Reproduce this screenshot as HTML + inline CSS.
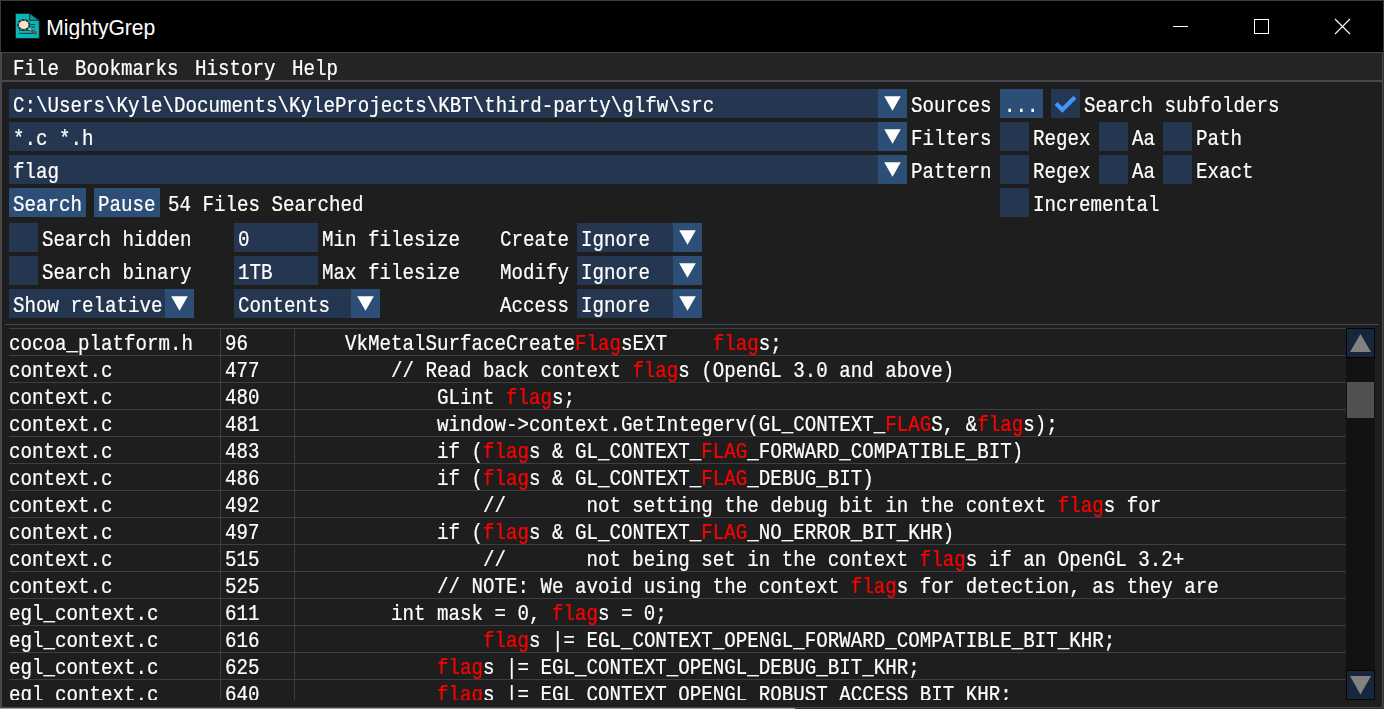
<!DOCTYPE html>
<html><head><meta charset="utf-8"><title>MightyGrep</title>
<style>
html,body{margin:0;padding:0;background:#000;}
body{width:1384px;height:709px;position:relative;overflow:hidden;font-family:"Liberation Mono",monospace;}
.r{position:absolute;display:block}
.t{position:absolute;white-space:pre;color:#fff;font-family:"Liberation Mono",monospace;font-size:19.165px;line-height:20px;height:20px;transform:scaleY(1.15);transform-origin:0 0;will-change:transform;-webkit-text-stroke:0.2px currentColor;}
.t b{font-weight:normal;color:#ff0000}
.title{position:absolute;white-space:pre;color:#fff;font-family:"Liberation Sans",sans-serif;font-size:21.1px;line-height:24px;transform:scaleY(1.05);transform-origin:0 4.8px;}
.clip{position:absolute;overflow:hidden}
</style></head><body>
<div class="r" style="left:0px;top:0px;width:1384px;height:709px;background:#000;"></div>
<div class="r" style="left:0px;top:0px;width:1384px;height:1px;background:#3c3c3c;"></div>
<svg class="r" style="left:15px;top:13px" width="26" height="27" viewBox="0 0 26 27">
<path d="M0.4 0.4H14.6L24.3 7.3V25.6H0.4Z" fill="#09b6b6" stroke="#2a1414" stroke-width="0.9"/>
<path d="M14.6 0.4V7.3H24.3Z" fill="#079797" stroke="#2a1414" stroke-width="0.8"/>
<path d="M16 11.5H20M16 14H20M4.3 17.3H16.2M4.1 20.4H18.9" stroke="#1c2626" stroke-width="0.9"/>
<ellipse cx="8.8" cy="11.9" rx="5.7" ry="4.95" fill="#f5e6c8" stroke="#56676e" stroke-width="1.7"/>
<ellipse cx="8.8" cy="11.9" rx="5.7" ry="4.95" fill="none" stroke="#222c33" stroke-width="1.7" stroke-dasharray="2.2 1.6"/>
<path d="M13.6 15.8L16.4 17.3" stroke="#e6dcc2" stroke-width="1.1"/>
<path d="M17.2 17.9L20.4 20" stroke="#4a5a60" stroke-width="3.2" stroke-linecap="round"/>
</svg>
<div class="title" style="left:46.3px;top:15px">MightyGrep</div>
<svg class="r" style="left:1160px;top:1px" width="222" height="51" viewBox="0 0 222 51"><path d="M13 25.5H28" stroke="#fff" stroke-width="1"/><rect x="94.5" y="18.5" width="14" height="14" fill="none" stroke="#fff" stroke-width="1"/><path d="M175 18L190 33M190 18L175 33" stroke="#fff" stroke-width="1.1"/></svg>
<div class="r" style="left:1px;top:52px;width:1382px;height:656px;background:#1e1e1e;"></div>
<div class="r" style="left:1px;top:52px;width:1382px;height:1px;background:#46464f;"></div>
<div class="r" style="left:1px;top:52px;width:1px;height:656px;background:#46464f;"></div>
<div class="r" style="left:1382px;top:52px;width:1px;height:656px;background:#46464f;"></div>
<div class="r" style="left:1px;top:707px;width:1382px;height:1px;background:#46464f;"></div>
<div class="r" style="left:1383px;top:0px;width:1px;height:709px;background:#363636;"></div>
<div class="r" style="left:0px;top:0px;width:1px;height:52px;background:#3a3a3a;"></div>
<div class="r" style="left:0px;top:52px;width:1px;height:657px;background:#4a4744;"></div>
<div class="r" style="left:0px;top:708px;width:795px;height:1px;background:#9c9c9c;"></div>
<div class="r" style="left:795px;top:708px;width:589px;height:1px;background:#2c2c2c;"></div>
<div class="r" style="left:2px;top:53px;width:1380px;height:27px;background:#242424;"></div>
<div class="r" style="left:1px;top:80px;width:1382px;height:2px;background:#46464f;"></div>
<div class="t" style="left:13px;top:57.5px">File</div>
<div class="t" style="left:75px;top:57.5px">Bookmarks</div>
<div class="t" style="left:195px;top:57.5px">History</div>
<div class="t" style="left:292px;top:57.5px">Help</div>
<div class="r" style="left:9px;top:89px;width:869px;height:29px;background:#243650;"></div>
<div class="r" style="left:878px;top:89px;width:29px;height:29px;background:#2d4e76;"></div>
<svg class="r" style="left:878px;top:89px" width="29" height="29" viewBox="0 0 29 29"><path d="M6.2 7.3H22.8L14.5 21.8Z" fill="#fff"/></svg>
<div class="t" style="left:13px;top:94.5px">C:\Users\Kyle\Documents\KyleProjects\KBT\third-party\glfw\src</div>
<div class="t" style="left:911px;top:94.5px">Sources</div>
<div class="r" style="left:1000px;top:89px;width:43px;height:29px;background:#2d4e76;"></div>
<div class="t" style="left:1004px;top:94.5px">...</div>
<div class="r" style="left:1051px;top:89px;width:29px;height:29px;background:#243650;"></div>
<svg class="r" style="left:1051px;top:89px" width="29" height="29" viewBox="0 0 29 29"><path d="M5.05 14.5L11.35 20.8L23.95 8.2" fill="none" stroke="#4296fa" stroke-width="4.2"/></svg>
<div class="t" style="left:1084px;top:94.5px">Search subfolders</div>
<div class="r" style="left:9px;top:122px;width:869px;height:29px;background:#243650;"></div>
<div class="r" style="left:878px;top:122px;width:29px;height:29px;background:#2d4e76;"></div>
<svg class="r" style="left:878px;top:122px" width="29" height="29" viewBox="0 0 29 29"><path d="M6.2 7.3H22.8L14.5 21.8Z" fill="#fff"/></svg>
<div class="t" style="left:13px;top:127.5px">*.c *.h</div>
<div class="t" style="left:911px;top:127.5px">Filters</div>
<div class="r" style="left:1000px;top:122px;width:29px;height:29px;background:#243650;"></div>
<div class="t" style="left:1033px;top:127.5px">Regex</div>
<div class="r" style="left:1099px;top:122px;width:29px;height:29px;background:#243650;"></div>
<div class="t" style="left:1132px;top:127.5px">Aa</div>
<div class="r" style="left:1163px;top:122px;width:29px;height:29px;background:#243650;"></div>
<div class="t" style="left:1196px;top:127.5px">Path</div>
<div class="r" style="left:9px;top:155px;width:869px;height:29px;background:#243650;"></div>
<div class="r" style="left:878px;top:155px;width:29px;height:29px;background:#2d4e76;"></div>
<svg class="r" style="left:878px;top:155px" width="29" height="29" viewBox="0 0 29 29"><path d="M6.2 7.3H22.8L14.5 21.8Z" fill="#fff"/></svg>
<div class="t" style="left:13px;top:160.5px">flag</div>
<div class="t" style="left:911px;top:160.5px">Pattern</div>
<div class="r" style="left:1000px;top:155px;width:29px;height:29px;background:#243650;"></div>
<div class="t" style="left:1033px;top:160.5px">Regex</div>
<div class="r" style="left:1099px;top:155px;width:29px;height:29px;background:#243650;"></div>
<div class="t" style="left:1132px;top:160.5px">Aa</div>
<div class="r" style="left:1163px;top:155px;width:29px;height:29px;background:#243650;"></div>
<div class="t" style="left:1196px;top:160.5px">Exact</div>
<div class="r" style="left:9px;top:188px;width:77px;height:29px;background:#2d4e76;"></div>
<div class="t" style="left:13px;top:193.5px">Search</div>
<div class="r" style="left:94px;top:188px;width:66px;height:29px;background:#2d4e76;"></div>
<div class="t" style="left:98px;top:193.5px">Pause</div>
<div class="t" style="left:168px;top:193.5px">54 Files Searched</div>
<div class="r" style="left:1000px;top:188px;width:29px;height:29px;background:#243650;"></div>
<div class="t" style="left:1033px;top:193.5px">Incremental</div>
<div class="r" style="left:9px;top:223px;width:29px;height:29px;background:#243650;"></div>
<div class="t" style="left:42px;top:228.5px">Search hidden</div>
<div class="r" style="left:234px;top:223px;width:84px;height:29px;background:#243650;"></div>
<div class="t" style="left:238px;top:228.5px">0</div>
<div class="t" style="left:322px;top:228.5px">Min filesize</div>
<div class="t" style="left:500px;top:228.5px">Create</div>
<div class="r" style="left:577px;top:223px;width:96px;height:29px;background:#243650;"></div>
<div class="r" style="left:673px;top:223px;width:29px;height:29px;background:#2d4e76;"></div>
<svg class="r" style="left:673px;top:223px" width="29" height="29" viewBox="0 0 29 29"><path d="M6.2 7.3H22.8L14.5 21.8Z" fill="#fff"/></svg>
<div class="t" style="left:581px;top:228.5px">Ignore</div>
<div class="r" style="left:9px;top:256px;width:29px;height:29px;background:#243650;"></div>
<div class="t" style="left:42px;top:261.5px">Search binary</div>
<div class="r" style="left:234px;top:256px;width:84px;height:29px;background:#243650;"></div>
<div class="t" style="left:238px;top:261.5px">1TB</div>
<div class="t" style="left:322px;top:261.5px">Max filesize</div>
<div class="t" style="left:500px;top:261.5px">Modify</div>
<div class="r" style="left:577px;top:256px;width:96px;height:29px;background:#243650;"></div>
<div class="r" style="left:673px;top:256px;width:29px;height:29px;background:#2d4e76;"></div>
<svg class="r" style="left:673px;top:256px" width="29" height="29" viewBox="0 0 29 29"><path d="M6.2 7.3H22.8L14.5 21.8Z" fill="#fff"/></svg>
<div class="t" style="left:581px;top:261.5px">Ignore</div>
<div class="r" style="left:9px;top:289px;width:156px;height:29px;background:#243650;"></div>
<div class="r" style="left:165px;top:289px;width:29px;height:29px;background:#2d4e76;"></div>
<svg class="r" style="left:165px;top:289px" width="29" height="29" viewBox="0 0 29 29"><path d="M6.2 7.3H22.8L14.5 21.8Z" fill="#fff"/></svg>
<div class="t" style="left:13px;top:294.5px">Show relative</div>
<div class="r" style="left:234px;top:289px;width:117px;height:29px;background:#243650;"></div>
<div class="r" style="left:351px;top:289px;width:29px;height:29px;background:#2d4e76;"></div>
<svg class="r" style="left:351px;top:289px" width="29" height="29" viewBox="0 0 29 29"><path d="M6.2 7.3H22.8L14.5 21.8Z" fill="#fff"/></svg>
<div class="t" style="left:238px;top:294.5px">Contents</div>
<div class="t" style="left:500px;top:294.5px">Access</div>
<div class="r" style="left:577px;top:289px;width:96px;height:29px;background:#243650;"></div>
<div class="r" style="left:673px;top:289px;width:29px;height:29px;background:#2d4e76;"></div>
<svg class="r" style="left:673px;top:289px" width="29" height="29" viewBox="0 0 29 29"><path d="M6.2 7.3H22.8L14.5 21.8Z" fill="#fff"/></svg>
<div class="t" style="left:581px;top:294.5px">Ignore</div>
<div class="r" style="left:5px;top:324px;width:1374px;height:1px;background:#46464f;"></div>
<div class="clip" style="left:0;top:328px;width:1384px;height:372px">
<div class="r" style="left:9px;top:0px;width:1337px;height:1px;background:#3d3d42"></div>
<div class="t" style="left:9px;top:4.75px">cocoa_platform.h</div>
<div class="t" style="left:225px;top:4.75px">96</div>
<div class="t" style="left:299px;top:4.75px">    VkMetalSurfaceCreate<b>Flag</b>sEXT    <b>flag</b>s;</div>
<div class="r" style="left:9px;top:27px;width:1337px;height:1px;background:#3d3d42"></div>
<div class="t" style="left:9px;top:31.75px">context.c</div>
<div class="t" style="left:225px;top:31.75px">477</div>
<div class="t" style="left:299px;top:31.75px">        // Read back context <b>flag</b>s (OpenGL 3.0 and above)</div>
<div class="r" style="left:9px;top:54px;width:1337px;height:1px;background:#3d3d42"></div>
<div class="t" style="left:9px;top:58.75px">context.c</div>
<div class="t" style="left:225px;top:58.75px">480</div>
<div class="t" style="left:299px;top:58.75px">            GLint <b>flag</b>s;</div>
<div class="r" style="left:9px;top:81px;width:1337px;height:1px;background:#3d3d42"></div>
<div class="t" style="left:9px;top:85.75px">context.c</div>
<div class="t" style="left:225px;top:85.75px">481</div>
<div class="t" style="left:299px;top:85.75px">            window-&gt;context.GetIntegerv(GL_CONTEXT_<b>FLAG</b>S, &amp;<b>flag</b>s);</div>
<div class="r" style="left:9px;top:108px;width:1337px;height:1px;background:#3d3d42"></div>
<div class="t" style="left:9px;top:112.75px">context.c</div>
<div class="t" style="left:225px;top:112.75px">483</div>
<div class="t" style="left:299px;top:112.75px">            if (<b>flag</b>s &amp; GL_CONTEXT_<b>FLAG</b>_FORWARD_COMPATIBLE_BIT)</div>
<div class="r" style="left:9px;top:135px;width:1337px;height:1px;background:#3d3d42"></div>
<div class="t" style="left:9px;top:139.75px">context.c</div>
<div class="t" style="left:225px;top:139.75px">486</div>
<div class="t" style="left:299px;top:139.75px">            if (<b>flag</b>s &amp; GL_CONTEXT_<b>FLAG</b>_DEBUG_BIT)</div>
<div class="r" style="left:9px;top:162px;width:1337px;height:1px;background:#3d3d42"></div>
<div class="t" style="left:9px;top:166.75px">context.c</div>
<div class="t" style="left:225px;top:166.75px">492</div>
<div class="t" style="left:299px;top:166.75px">                //       not setting the debug bit in the context <b>flag</b>s for</div>
<div class="r" style="left:9px;top:189px;width:1337px;height:1px;background:#3d3d42"></div>
<div class="t" style="left:9px;top:193.75px">context.c</div>
<div class="t" style="left:225px;top:193.75px">497</div>
<div class="t" style="left:299px;top:193.75px">            if (<b>flag</b>s &amp; GL_CONTEXT_<b>FLAG</b>_NO_ERROR_BIT_KHR)</div>
<div class="r" style="left:9px;top:216px;width:1337px;height:1px;background:#3d3d42"></div>
<div class="t" style="left:9px;top:220.75px">context.c</div>
<div class="t" style="left:225px;top:220.75px">515</div>
<div class="t" style="left:299px;top:220.75px">                //       not being set in the context <b>flag</b>s if an OpenGL 3.2+</div>
<div class="r" style="left:9px;top:243px;width:1337px;height:1px;background:#3d3d42"></div>
<div class="t" style="left:9px;top:247.75px">context.c</div>
<div class="t" style="left:225px;top:247.75px">525</div>
<div class="t" style="left:299px;top:247.75px">            // NOTE: We avoid using the context <b>flag</b>s for detection, as they are</div>
<div class="r" style="left:9px;top:270px;width:1337px;height:1px;background:#3d3d42"></div>
<div class="t" style="left:9px;top:274.75px">egl_context.c</div>
<div class="t" style="left:225px;top:274.75px">611</div>
<div class="t" style="left:299px;top:274.75px">        int mask = 0, <b>flag</b>s = 0;</div>
<div class="r" style="left:9px;top:297px;width:1337px;height:1px;background:#3d3d42"></div>
<div class="t" style="left:9px;top:301.75px">egl_context.c</div>
<div class="t" style="left:225px;top:301.75px">616</div>
<div class="t" style="left:299px;top:301.75px">                <b>flag</b>s |= EGL_CONTEXT_OPENGL_FORWARD_COMPATIBLE_BIT_KHR;</div>
<div class="r" style="left:9px;top:324px;width:1337px;height:1px;background:#3d3d42"></div>
<div class="t" style="left:9px;top:328.75px">egl_context.c</div>
<div class="t" style="left:225px;top:328.75px">625</div>
<div class="t" style="left:299px;top:328.75px">            <b>flag</b>s |= EGL_CONTEXT_OPENGL_DEBUG_BIT_KHR;</div>
<div class="r" style="left:9px;top:351px;width:1337px;height:1px;background:#3d3d42"></div>
<div class="t" style="left:9px;top:355.75px">egl_context.c</div>
<div class="t" style="left:225px;top:355.75px">640</div>
<div class="t" style="left:299px;top:355.75px">            <b>flag</b>s |= EGL_CONTEXT_OPENGL_ROBUST_ACCESS_BIT_KHR;</div>
<div class="r" style="left:220px;top:0;width:1px;height:372px;background:#3d3d42"></div>
<div class="r" style="left:294px;top:0;width:1px;height:372px;background:#3d3d42"></div>
</div>
<div class="r" style="left:1346px;top:328px;width:29px;height:372px;background:#121212;"></div>
<div class="r" style="left:1346px;top:328px;width:29px;height:30px;background:#16263c;box-shadow:inset 0 0 0 1px #050505"></div>
<div class="r" style="left:1346px;top:670px;width:29px;height:30px;background:#16263c;box-shadow:inset 0 0 0 1px #050505"></div>
<svg class="r" style="left:1346px;top:328px" width="29" height="30" viewBox="0 0 29 30"><path d="M4 24H25L14.5 6Z" fill="#828282"/></svg>
<svg class="r" style="left:1346px;top:670px" width="29" height="30" viewBox="0 0 29 30"><path d="M4 6H25L14.5 24.5Z" fill="#828282"/></svg>
<div class="r" style="left:1347px;top:382px;width:27px;height:36px;background:#515151;"></div>
</body></html>
